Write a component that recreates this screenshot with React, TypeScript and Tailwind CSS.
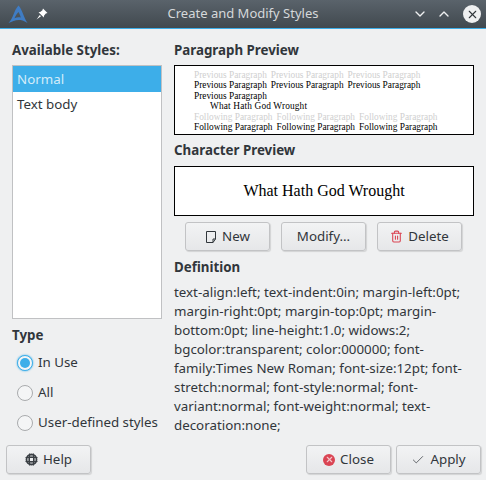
import React from "react";
import { ChevronDown, ChevronUp, X, Trash2, Check } from "lucide-react";

const buttonClass =
  "w-[85px] h-[29px] flex items-center justify-center gap-[5px] rounded-[3px] border border-[#c2c3c5] bg-gradient-to-b from-[#f2f3f4] to-[#e6e7e9] shadow-[1px_1px_1px_rgba(0,0,0,0.12)] text-[13.33px] text-[#31363b]";

const Heading = ({ children, className = "" }: { children: React.ReactNode; className?: string }) => (
  <div className={`text-[13.33px] leading-[18px] font-bold text-[#31363b] ${className}`}>{children}</div>
);

const Radio = ({ label, checked }: { label: string; checked?: boolean }) => (
  <div className="h-[30px] flex items-center gap-[5px] pl-[5px]">
    <span
      className={`w-[16px] h-[16px] rounded-full border flex items-center justify-center bg-[#f4f5f6] ${
        checked ? "border-[#3daee9] shadow-[0_0_2px_#3daee9]" : "border-[#a9abad]"
      }`}
    >
      {checked && <span className="w-[10px] h-[10px] rounded-full bg-[#3daee9]" />}
    </span>
    <span>{label}</span>
  </div>
);

const PreviewLine = ({ words, gray, indent }: { words: string[]; gray?: boolean; indent?: boolean }) => (
  <div
    className={`flex gap-[4px] h-[10.4px] leading-[10.4px] ${gray ? "text-[#cfcfcf]" : "text-black"} ${
      indent ? "pl-[16px] tracking-[0.15px]" : ""
    }`}
  >
    {words.map((word, i) => (
      <span key={i}>{word}</span>
    ))}
  </div>
);

export default function App() {
  const prev = ["Previous Paragraph", "Previous Paragraph", "Previous Paragraph"];
  const next = ["Following Paragraph", "Following Paragraph", "Following Paragraph"];

  return (
    <div className="w-[486px] h-[480px] flex flex-col overflow-hidden bg-[#eff0f1] text-[13.33px] text-[#31363b] font-['Noto_Sans',sans-serif]">
      {/* title bar */}
      <div className="h-[29px] shrink-0 flex items-center border-b border-[#3daee9] bg-gradient-to-b from-[#5a636b] to-[#41494f] text-[#d5d8da]">
        <svg width="20" height="19" viewBox="0 0 20 19" className="ml-[8px]">
          <path d="M0.5 18 C5 14 6 5 10.5 0.5 C14 4 16 13 19.5 18 C15.5 15.5 13.5 15 10.5 15 C7 15 4 16.5 0.5 18 Z M6.5 13.2 C8.5 12.4 10 12.2 12.8 12.5 C12 10 11.3 8 10.5 7 C9 8.5 7.5 10.8 6.5 13.2 Z" fill="#3f7cc4" fillRule="evenodd" />
        </svg>
        <svg width="12" height="12" viewBox="0 0 12 12" className="ml-[8px] text-white" fill="currentColor">
          <path d="M7 0.5 L11.5 5 L9.8 5.6 L8 7.8 L7.8 9.5 L2.5 4.2 L4.2 4 L6.4 2.2 Z" />
          <path d="M3.8 7 L5 8.2 L0.5 11.5 Z" />
        </svg>
        <div className="flex-1 text-center text-[13px] pl-[26px]">Create and Modify Styles</div>
        <ChevronDown size={16} className="mr-[8px] text-[#eff0f1]" />
        <ChevronUp size={16} className="mr-[11px] text-[#eff0f1]" />
        <span className="w-[18px] h-[18px] mr-[5px] rounded-full bg-[#eff0f1] flex items-center justify-center text-[#31363b]">
          <X size={13} />
        </span>
      </div>

      <div className="flex-1 flex px-[12px] pt-[12px] gap-[12px]">
        {/* left column */}
        <div className="w-[150px] shrink-0 flex flex-col">
          <Heading className="mb-[6px]">Available Styles:</Heading>
          <div className="h-[254px] border border-[#c0c1c3] bg-white">
            <div className="h-[26px] pt-[1px] leading-[25px] pl-[4px] bg-[#3daee9] text-[#d4ecf9]">Normal</div>
            <div className="h-[25px] leading-[25px] pl-[4px]">Text body</div>
          </div>
          <Heading className="mt-[7px] mb-[4px]">Type</Heading>
          <Radio label="In Use" checked />
          <Radio label="All" />
          <Radio label="User-defined styles" />
        </div>

        {/* right column */}
        <div className="w-[300px] shrink-0 flex flex-col">
          <Heading className="mb-[6px]">Paragraph Preview</Heading>
          <div className="h-[70px] border border-black bg-white pt-[4px] pl-[19px] text-[9.33px] font-['Liberation_Serif',serif]">
            <PreviewLine words={prev} gray />
            <PreviewLine words={prev} />
            <PreviewLine words={["Previous Paragraph"]} />
            <PreviewLine words={["What Hath God Wrought"]} indent />
            <PreviewLine words={next} gray />
            <PreviewLine words={next} />
          </div>
          <Heading className="mt-[6px] mb-[7px]">Character Preview</Heading>
          <div className="h-[50px] border border-black bg-white flex items-center justify-center text-[16px] text-black font-['Liberation_Serif',serif]">
            What Hath God Wrought
          </div>
          <div className="flex pl-[11px] gap-[11px] mt-[6px]">
            <button className={buttonClass}>
              <svg width="12" height="12" viewBox="0 0 12 12" fill="none" stroke="#31363b" strokeWidth="1">
                <path d="M1.5 0.5 H10.5 V8 L8 11.5 H1.5 Z M8 11.5 V8 H10.5" />
              </svg>
              New
            </button>
            <button className={buttonClass}>Modify...</button>
            <button className={buttonClass}>
              <Trash2 size={13} className="text-[#da4453]" />
              Delete
            </button>
          </div>
          <Heading className="mt-[7px] mb-[7px]">Definition</Heading>
          <div className="leading-[19px] w-[296px]">
            text-align:left; text-indent:0in; margin-left:0pt; margin-right:0pt; margin-top:0pt; margin-bottom:0pt; line-height:1.0; widows:2; bgcolor:transparent; color:000000; font-family:Times New Roman; font-size:12pt; font-stretch:normal; font-style:normal; font-variant:normal; font-weight:normal; text-decoration:none;
          </div>
        </div>
      </div>

      {/* bottom buttons */}
      <div className="h-[35px] shrink-0 flex items-start justify-between pl-[6px] pr-[5px]">
        <button className={buttonClass}>
          <svg width="13" height="13" viewBox="0 0 13 13" fill="none" stroke="#3a3f44">
            <circle cx="6.5" cy="6.5" r="5" strokeWidth="1.8" />
            <rect x="4" y="4" width="5" height="5" strokeWidth="1.2" />
            <path d="M4.5 0.5 V12.5 M8.5 0.5 V12.5 M0.5 4.5 H12.5 M0.5 8.5 H12.5" strokeWidth="1" />
          </svg>
          Help
        </button>
        <div className="flex gap-[5px]">
          <button className={buttonClass}>
            <span className="w-[12px] h-[12px] rounded-full bg-[#da4453] flex items-center justify-center">
              <X size={9} strokeWidth={3} className="text-[#f4c6cb]" />
            </span>
            Close
          </button>
          <button className={buttonClass}>
            <Check size={14} strokeWidth={1.25} />
            Apply
          </button>
        </div>
      </div>
    </div>
  );
}
